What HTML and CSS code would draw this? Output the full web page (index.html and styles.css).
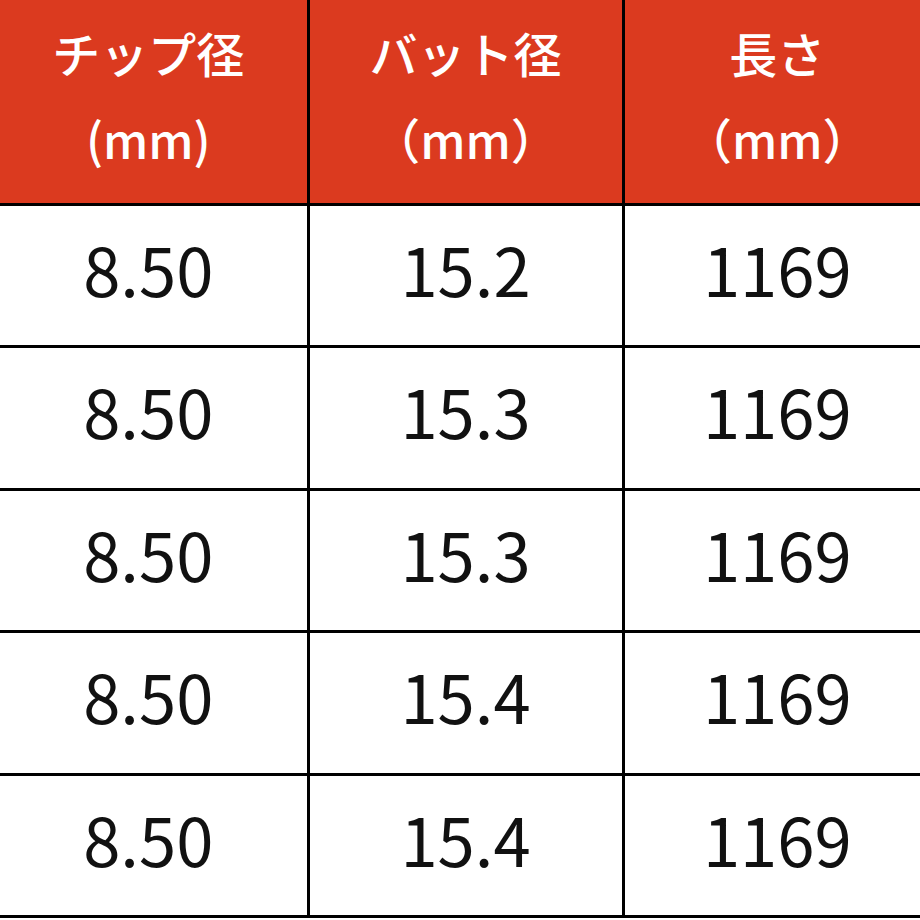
FILE: index.html
```html
<!DOCTYPE html>
<html lang="ja">
<head>
<meta charset="utf-8">
<title>スペック表</title>
<link rel="stylesheet" href="styles.css">
</head>
<body>
<div class="wrap">
<table class="spec">
<colgroup><col class="c1"><col class="c2"><col class="c3"></colgroup>
<thead>
<tr><th>チップ径<br>(mm)</th><th>バット径<br>（mm）</th><th>長さ<br>（mm）</th></tr>
</thead>
<tbody>
<tr><td>8.50</td><td>15.2</td><td>1169</td></tr>
<tr><td>8.50</td><td>15.3</td><td>1169</td></tr>
<tr><td>8.50</td><td>15.3</td><td>1169</td></tr>
<tr><td>8.50</td><td>15.4</td><td>1169</td></tr>
<tr><td>8.50</td><td>15.4</td><td>1169</td></tr>
</tbody>
</table>
</div>
</body>
</html>
```
FILE: styles.css
```css
html, body {
  margin: 0;
  padding: 0;
  overflow: hidden;
  background: #fff;
}
.wrap {
  margin-left: -10px;
  width: 940px;
}
.spec {
  width: 940px;
  table-layout: fixed;
  border-collapse: collapse;
  font-family: "Noto Sans CJK JP", "Noto Sans", sans-serif;
}
.c1 { width: 318px; }
.c2 { width: 315px; }
.c3 { width: 307px; }
.spec th, .spec td {
  border: 3px solid #000;
  text-align: center;
  padding: 0;
}
.spec tr > :first-child { border-left: none; }
.spec tr > :last-child { border-right: none; }
.spec th {
  border-top: none;
  background: #db3a1f;
  color: #fff;
  font-size: 48px;
  font-weight: 500;
  line-height: 86px;
  padding: 9px 0 22px;
}
.spec td {
  color: #111;
  font-size: 67px;
  font-weight: 400;
  line-height: 123.4px;
  padding: 0 0 16px;
}
```
